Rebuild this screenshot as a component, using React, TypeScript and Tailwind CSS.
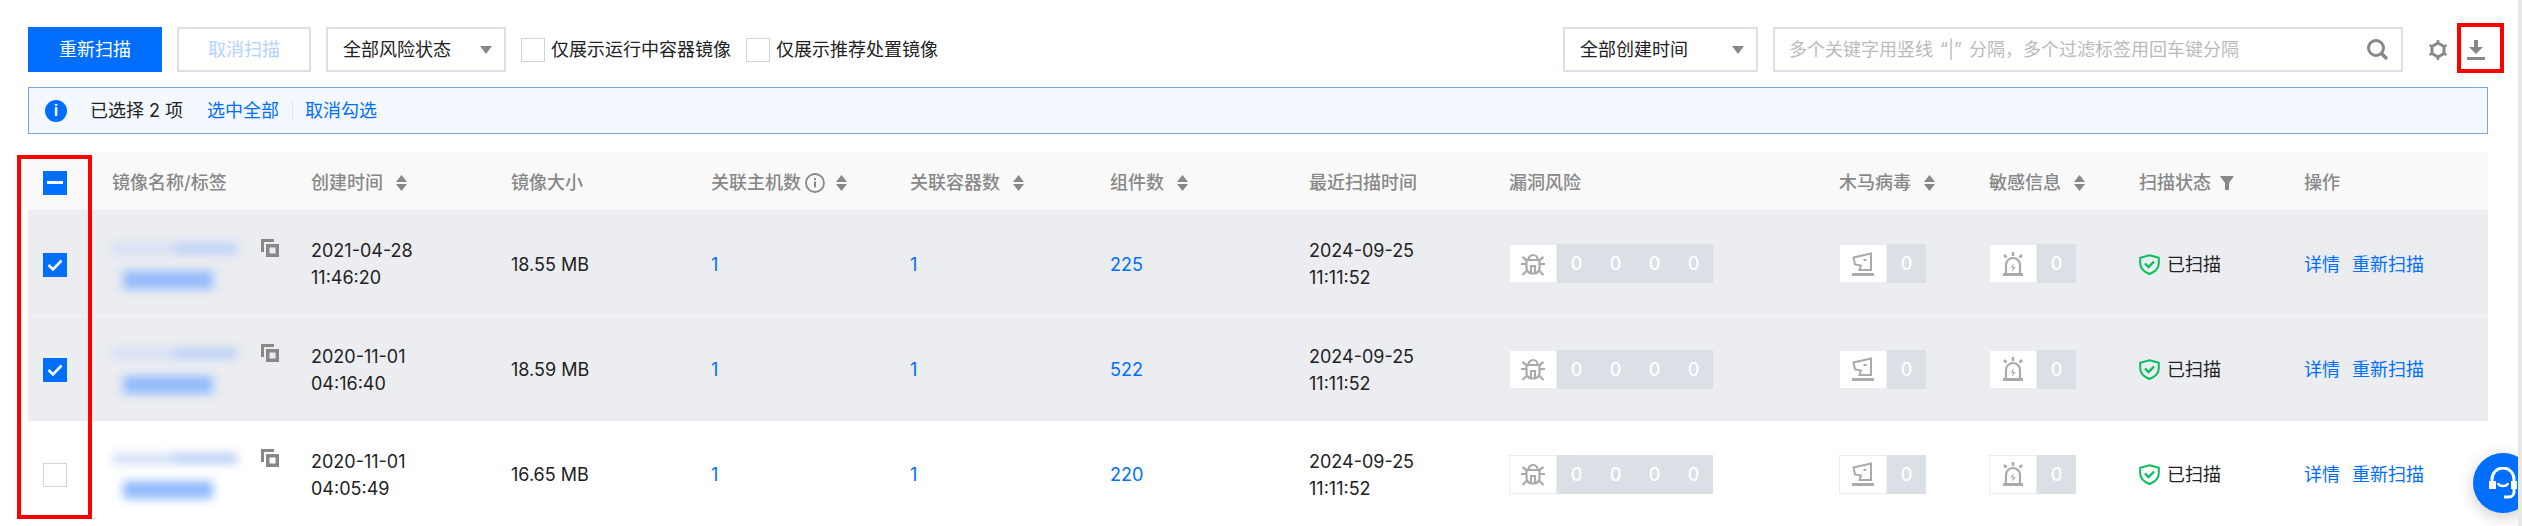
const GRID = "grid grid-cols-[69px_199px_200px_200px_199px_200px_199px_200px_330px_150px_150px_165px_199px]";

function Tri() {
  return (
    <svg width="12" height="8" viewBox="0 0 12 8">
      <path d="M0 0h12L6 8z" fill="#888888" />
    </svg>
  );
}

function Sort() {
  return (
    <svg width="11" height="16" viewBox="0 0 11 16" className="ml-[13px]">
      <path d="M5.500 0L11 7H0zM5.500 16L0 9h11z" fill="#888888" />
    </svg>
  );
}

function Check({ state }: { state: "on" | "off" | "some" }) {
  if (state === "off") return <div className="w-6 h-6 border border-[#cfd5de] bg-white" />;
  return (
    <div className="w-6 h-6 bg-[#006eff] flex items-center justify-center">
      {state === "on" ? (
        <svg width="16" height="14" viewBox="0 0 16 14">
          <path d="M1.500 7l4.500 4.500L14.500 2.500" stroke="#fff" strokeWidth="2.600" fill="none" />
        </svg>
      ) : (
        <div className="w-[16px] h-[3px] bg-white" />
      )}
    </div>
  );
}

function Copy() {
  return (
    <svg width="18" height="18" viewBox="0 0 18 18">
      <path d="M0 0h13v3H3v10H0z" fill="#888888" />
      <path fillRule="evenodd" d="M5 5h13v13H5zM8.500 8.500v6h6v-6z" fill="#888888" />
    </svg>
  );
}

function BugIcon() {
  return (
    <svg width="24" height="24" viewBox="0 0 24 24" fill="none" stroke="#aaaaaa" strokeWidth="2.200">
      <path d="M7.500 7.500a4.500 4.500 0 0 1 9 0" />
      <path d="M5.500 8h13v8a5.500 5.500 0 0 1-5.500 5.500h-2A5.500 5.500 0 0 1 5.500 16z" />
      <path d="M10 21v-7h4v7" />
      <path d="M0 12h5.500M18.500 12H24M1.500 5l4 3M22.500 5l-4 3M1.500 23l4-4M22.500 23l-4-4" />
    </svg>
  );
}

function HorseIcon() {
  return (
    <svg width="22" height="24" viewBox="0 0 22 24" fill="none" stroke="#aaaaaa" strokeWidth="2">
      <path d="M1.500 5.500L19 1.500V18H7.500L9 13.500 3 12.500z" />
      <path d="M11.500 8h3" />
      <path d="M0 22.500h22" strokeWidth="3" />
    </svg>
  );
}

function AlarmIcon() {
  return (
    <svg width="22" height="24" viewBox="0 0 22 24" fill="none" stroke="#aaaaaa" strokeWidth="2.200">
      <path d="M4 22V13a7 7 0 0 1 14 0v9" />
      <path d="M1 22.500h20" strokeWidth="3" />
      <path d="M11 0v4M2 3l2.500 2.500M20 3l-2.500 2.500" strokeWidth="2.500" />
      <path d="M12 11l-3.500 4.500H11L10 20l3.500-5H11z" fill="#aaaaaa" stroke="none" />
    </svg>
  );
}

function Shield() {
  return (
    <svg width="21" height="21" viewBox="0 0 21 21" fill="none">
      <path d="M10.500 1.200L19.800 3.800V9.500C19.800 14.500 15.500 18 10.500 20 5.500 18 1.200 14.500 1.200 9.500V3.800z" stroke="#0abf5b" strokeWidth="2" />
      <path d="M6 9.500l3.500 3.500 5.500-5.500" stroke="#0abf5b" strokeWidth="2.400" />
    </svg>
  );
}

function Badge({ icon, values }: { icon: React.ReactNode; values: number }) {
  return (
    <div className="flex items-center h-[39px]">
      <div className="w-[48px] h-[39px] bg-white border border-[#ebedf1] flex items-center justify-center">{icon}</div>
      <div className="h-[39px] bg-[#dbdfe6] flex">
        {Array.from({ length: values }).map((_, i) => (
          <div key={i} className="w-[39px] flex items-center justify-center text-white font-medium text-[18px]">0</div>
        ))}
      </div>
    </div>
  );
}

function Cell({ children, className = "" }: { children?: React.ReactNode; className?: string }) {
  return <div className={"pl-[15px] flex items-center " + className}>{children}</div>;
}

function Head({ label, sort, children }: { label: string; sort?: boolean; children?: React.ReactNode }) {
  return (
    <Cell className="pt-[3px]">
      <span>{label}</span>
      {children}
      {sort && <Sort />}
    </Cell>
  );
}

const rows = [
  { check: "on" as const, d: "2021-04-28", t: "11:46:20", size: "18.55 MB", comp: "225", bg: "bg-[#ebedf1] border-b border-[#f3f4f7]" },
  { check: "on" as const, d: "2020-11-01", t: "04:16:40", size: "18.59 MB", comp: "522", bg: "bg-[#ebedf1]" },
  { check: "off" as const, d: "2020-11-01", t: "04:05:49", size: "16.65 MB", comp: "220", bg: "bg-white" },
];

export default function App() {
  return (
    <div className="relative h-[526px] w-[2522px] overflow-hidden bg-white flex text-[18px] text-[#222222] font-['Inter','Noto_Sans_CJK_SC',sans-serif]">
      <div className="w-[2518px] pl-[28px] pr-[30px] pt-[27px]">
        <div className="flex items-center h-[45px]">
          <button className="w-[134px] h-[45px] bg-[#006eff] text-white">重新扫描</button>
          <button className="w-[134px] h-[45px] ml-[15px] border-2 border-[#dcdfe5] text-[#b3d4ff]">取消扫描</button>
          <div className="w-[180px] h-[45px] ml-[15px] border-2 border-[#dcdfe5] flex items-center justify-between pl-[15px] pr-[12px]">
            <span>全部风险状态</span>
            <Tri />
          </div>
          <div className="ml-[15px] flex items-center">
            <Check state="off" />
            <span className="ml-[6px]">仅展示运行中容器镜像</span>
          </div>
          <div className="ml-[15px] flex items-center">
            <Check state="off" />
            <span className="ml-[6px]">仅展示推荐处置镜像</span>
          </div>
          <div className="ml-auto w-[195px] h-[45px] border-2 border-[#dcdfe5] flex items-center justify-between pl-[15px] pr-[12px]">
            <span>全部创建时间</span>
            <Tri />
          </div>
          <div className="ml-[15px] w-[630px] h-[45px] border-2 border-[#dcdfe5] flex items-center justify-between pl-[14px] pr-[12px]">
            <span className="text-[#bbbbbb]">多个关键字用竖线 <span className="mx-[2px]">“|”</span> 分隔，多个过滤标签用回车键分隔</span>
            <svg width="23" height="23" viewBox="0 0 23 23" fill="none" stroke="#888888">
              <circle cx="10" cy="10" r="7.500" strokeWidth="3" />
              <path d="M15.500 15.500L21 21" strokeWidth="3.500" />
            </svg>
          </div>
          <svg width="20" height="20" viewBox="0 0 20 20" className="ml-[25px]" fill="none" stroke="#888888">
            <path d="M10 3l6 3.500v7L10 17l-6-3.500v-7z" strokeWidth="3" />
            <path d="M10 0v3M10 17v3M1.500 5l2.500 1.500M18.500 5L16 6.500M1.500 15L4 13.500M18.500 15L16 13.500" strokeWidth="2.500" />
          </svg>
          <svg width="18" height="20" viewBox="0 0 18 20" className="ml-[19px] mr-[3px]">
            <path d="M7 0h4v7h5l-7 7-7-7h5z" fill="#888888" />
            <path d="M0 17h18v3H0z" fill="#888888" />
          </svg>
        </div>

        <div className="mt-[15px] h-[47px] border border-[#7ea2e6] bg-[#f4f8ff] flex items-center pl-[16px]">
          <div className="w-[22px] h-[22px] rounded-full bg-[#006eff] text-white flex items-center justify-center text-[16px] font-bold font-['Liberation_Sans',sans-serif]">i</div>
          <span className="ml-[23px]">已选择 2 项</span>
          <a className="ml-[24px] text-[#006eff]">选中全部</a>
          <span className="ml-[13px] mr-[12px] w-px h-[18px] bg-[#e0e6f0]" />
          <a className="text-[#006eff]">取消勾选</a>
        </div>

        <div className={GRID + " mt-[18px] h-[59px] bg-[#f9f9f9] border-b border-[#eeeeee] text-[#888888] font-medium"}>
          <Cell className="pt-[3px]"><Check state="some" /></Cell>
          <Head label="镜像名称/标签" />
          <Head label="创建时间" sort />
          <Head label="镜像大小" />
          <Head label="关联主机数" sort>
            <svg width="20" height="20" viewBox="0 0 20 20" className="ml-[4px] -mr-[2px]" fill="none" stroke="#888888" strokeWidth="1.800">
              <circle cx="10" cy="10" r="9" />
              <path d="M10 8.500v6M10 5v2" strokeWidth="2" />
            </svg>
          </Head>
          <Head label="关联容器数" sort />
          <Head label="组件数" sort />
          <Head label="最近扫描时间" />
          <Head label="漏洞风险" />
          <Head label="木马病毒" sort />
          <Head label="敏感信息" sort />
          <Head label="扫描状态">
            <svg width="14" height="14" viewBox="0 0 14 14" className="ml-[9px]">
              <path d="M0 0h14L9 7v7H5V7z" fill="#888888" />
            </svg>
          </Head>
          <Head label="操作" />
        </div>

        {rows.map((r, i) => (
          <div key={i} className={GRID + " h-[105px] " + r.bg}>
            <Cell className="pt-[3px]"><Check state={r.check} /></Cell>
            <div className="pl-[15px] pt-[28px] flex items-start">
              <div className="w-[149px]">
                <div className="mt-[4px] flex blur-[5px]">
                  <div className="w-[62px] h-[11px] bg-[#d5e0f6]" />
                  <div className="w-[63px] h-[11px] bg-[#bcd0f6]" />
                </div>
                <div className="mt-[17px] ml-[11px] w-[90px] h-[18px] bg-[#94bbfc] blur-[5px]" />
              </div>
              <Copy />
            </div>
            <Cell className="leading-[27px] pt-[2px]"><div>{r.d}<br />{r.t}</div></Cell>
            <Cell className="pt-[2px]">{r.size}</Cell>
            <Cell className="pt-[2px] text-[#006eff]">1</Cell>
            <Cell className="pt-[2px] text-[#006eff]">1</Cell>
            <Cell className="pt-[2px] text-[#006eff]">{r.comp}</Cell>
            <Cell className="leading-[27px] pt-[2px]"><div>2024-09-25<br />11:11:52</div></Cell>
            <Cell className="pt-[1px]"><Badge icon={<BugIcon />} values={4} /></Cell>
            <Cell className="pt-[1px]"><Badge icon={<HorseIcon />} values={1} /></Cell>
            <Cell className="pt-[1px]"><Badge icon={<AlarmIcon />} values={1} /></Cell>
            <Cell className="pt-[2px]">
              <Shield />
              <span className="ml-[7px]">已扫描</span>
            </Cell>
            <Cell className="pt-[2px] text-[#006eff]">
              <a>详情</a>
              <a className="ml-[12px]">重新扫描</a>
            </Cell>
          </div>
        ))}
      </div>

      <div className="relative z-10 w-[4px] h-full bg-[#e8e8e8]" />

      <div className="absolute left-[17px] top-[155px] w-[75px] h-[364px] border-4 border-[#ff0000] pointer-events-none" />
      <div className="absolute left-[2457px] top-[23px] w-[47px] h-[50px] border-4 border-[#ff0000] pointer-events-none" />

      <div className="absolute left-[2473px] top-[453px] w-[60px] h-[60px] rounded-full bg-[#006eff] shadow-[0_4px_16px_rgba(0,0,0,0.2)] flex items-center justify-center">
        <svg width="32" height="32" viewBox="0 0 32 32" fill="none" stroke="#fff">
          <path d="M5 15v-3a11 11 0 0 1 22 0v13a5 5 0 0 1-5 5h-5" strokeWidth="3" />
          <path d="M11 16c1 4 9 4 10 0" strokeWidth="2.500" />
          <path d="M2 14h7v8H2zM24 14h6v8h-6z" fill="#fff" stroke="none" />
        </svg>
      </div>
    </div>
  );
}
